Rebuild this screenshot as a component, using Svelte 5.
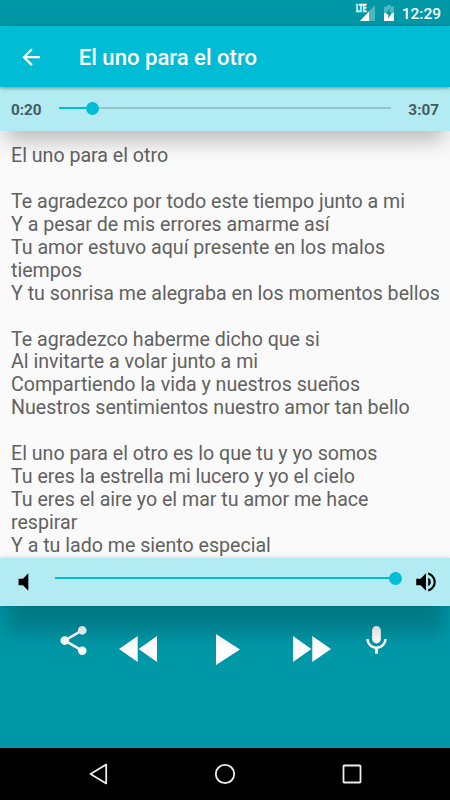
<script>
	let title = "El uno para el otro";
	let elapsed = "0:20";
	let duration = "3:07";
	let progress = 10.2;
	let volume = 100;

	const lyrics = `El uno para el otro

Te agradezco por todo este tiempo junto a mi
Y a pesar de mis errores amarme así
Tu amor estuvo aquí presente en los malos
tiempos
Y tu sonrisa me alegraba en los momentos bellos

Te agradezco haberme dicho que si
Al invitarte a volar junto a mi
Compartiendo la vida y nuestros sueños
Nuestros sentimientos nuestro amor tan bello

El uno para el otro es lo que tu y yo somos
Tu eres la estrella mi lucero y yo el cielo
Tu eres el aire yo el mar tu amor me hace
respirar
Y a tu lado me siento especial`;
</script>

<div class="screen">
	<div class="status-bar">
		<svg class="signal" width="21" height="22" viewBox="-1 -4 21 22">
			<path d="M19 1v16H4z" fill="#fff" fill-opacity="0.3" />
			<path d="M13 7.4V17H4z" fill="#fff" />
			<path d="M0 0h11v9H0z" fill="#0097a7" />
			<text x="0" y="8.2" textLength="10.4" lengthAdjust="spacingAndGlyphs">LTE</text>
		</svg>
		<svg class="battery" width="10" height="16" viewBox="0 0 10 16">
			<path d="M3 0h4v1.5h3V8H0V1.5h3z" fill="#fff" fill-opacity="0.3" />
			<path d="M0 8h10v8H0z" fill="#fff" />
			<path d="M5.7 3.5v4.2H8L4.3 13.5V9.3H2z" fill="#0097a7" />
		</svg>
		<span class="clock">12:29</span>
	</div>

	<header class="toolbar">
		<svg width="26.25" height="26.25" viewBox="0 0 24 24" fill="#fff">
			<path d="M20 11H7.83l5.59-5.59L12 4l-8 8 8 8 1.41-1.41L7.83 13H20v-2z" />
		</svg>
		<h1>{title}</h1>
	</header>

	<div class="seek-bar">
		<span class="time">{elapsed}</span>
		<div class="track">
			<div class="fill" style="width: {progress}%"></div>
			<div class="thumb" style="left: {progress}%"></div>
		</div>
		<span class="time">{duration}</span>
	</div>

	<main class="lyrics">{lyrics}</main>

	<div class="volume-bar">
		<svg width="26" height="26" viewBox="0 0 24 24">
			<path d="M7 9v6h4l5 5V4l-5 5H7z" />
		</svg>
		<div class="track">
			<div class="fill" style="width: {volume}%"></div>
			<div class="thumb" style="left: {volume}%"></div>
		</div>
		<svg width="26" height="26" viewBox="0 0 24 24">
			<path d="M3 9v6h4l5 5V4L7 9H3zm13.5 3c0-1.77-1.02-3.29-2.5-4.03v8.05c1.48-.73 2.5-2.25 2.5-4.02zM14 3.23v2.06c2.89.86 5 3.54 5 6.71s-2.11 5.85-5 6.71v2.06c4.01-.91 7-4.49 7-8.77s-2.99-7.86-7-8.77z" />
		</svg>
	</div>

	<div class="controls">
		<svg class="share" width="35" height="35" viewBox="0 0 24 24">
			<path d="M18 16.08c-.76 0-1.44.3-1.96.77L8.91 12.7c.05-.23.09-.46.09-.7s-.04-.47-.09-.7l7.05-4.11c.54.5 1.25.81 2.04.81 1.66 0 3-1.34 3-3s-1.34-3-3-3-3 1.34-3 3c0 .24.04.47.09.7L8.04 9.81C7.5 9.31 6.79 9 6 9c-1.66 0-3 1.34-3 3s1.34 3 3 3c.79 0 1.5-.31 2.04-.81l7.12 4.16c-.05.21-.08.43-.08.65 0 1.61 1.31 2.92 2.92 2.92 1.61 0 2.92-1.31 2.92-2.92s-1.31-2.92-2.92-2.92z" />
		</svg>
		<svg class="rewind" width="38" height="26" viewBox="0 0 38 26">
			<path d="M18.7 0v26L0 13zM38 0v26L19.6 13z" />
		</svg>
		<svg class="play" width="24" height="31" viewBox="0 0 24 31">
			<path d="M0 0v31l24-15.5z" />
		</svg>
		<svg class="forward" width="38" height="26" viewBox="0 0 38 26">
			<path d="M0 0v26l18.4-13zM19.3 0v26L38 13z" />
		</svg>
		<svg class="mic" width="35" height="35" viewBox="0 0 24 24">
			<path d="M12 14c1.66 0 2.99-1.34 2.99-3L15 5c0-1.66-1.34-3-3-3S9 3.34 9 5v6c0 1.66 1.34 3 3 3zm5.3-3c0 3-2.54 5.1-5.3 5.1S6.7 14 6.7 11H5c0 3.41 2.72 6.23 6 6.72V21h2v-3.28c3.28-.48 6-3.3 6-6.72h-1.7z" />
		</svg>
	</div>

	<nav class="nav-bar">
		<svg width="22" height="22" viewBox="0 0 22 22">
			<path d="M18.2 1.6v18.8L2.5 11z" />
		</svg>
		<svg width="22" height="22" viewBox="0 0 22 22">
			<circle cx="11" cy="11" r="9.2" />
		</svg>
		<svg width="22" height="22" viewBox="0 0 22 22">
			<rect x="2.5" y="2.5" width="17" height="17" rx="0.7" />
		</svg>
	</nav>
</div>

<style>
	:global(body) {
		margin: 0;
	}

	.screen {
		display: flex;
		flex-direction: column;
		width: 450px;
		height: 800px;
		overflow: hidden;
		background: #fafafa;
		font-family: Roboto, sans-serif;
	}

	svg {
		display: block;
		flex-shrink: 0;
	}

	.status-bar {
		display: flex;
		justify-content: flex-end;
		box-sizing: border-box;
		height: 26px;
		flex-shrink: 0;
		padding-right: 9px;
		background: #0097a7;
		color: #fff;
	}

	.signal {
		margin: 0 8px 0 0;
		overflow: visible;
	}

	.signal text {
		font-size: 10px;
		font-weight: 700;
		fill: #fff;
		stroke: #fff;
		stroke-width: 0.5px;
	}

	.battery {
		margin: 5px 8px 0 0;
	}

	.clock {
		font-size: 15.5px;
		font-weight: 500;
		line-height: 28px;
	}

	.toolbar {
		display: flex;
		align-items: center;
		flex-shrink: 0;
		gap: 35px;
		height: 61px;
		padding-left: 17.5px;
		background: #00bcd4;
		box-shadow: 0 1px 4px rgba(0, 0, 0, 0.4);
		position: relative;
		z-index: 3;
	}

	.toolbar svg {
		margin-top: 1px;
	}

	h1 {
		margin: 0;
		color: #fff;
		font-size: 22.1px;
		font-weight: 500;
	}

	.seek-bar {
		display: flex;
		align-items: center;
		box-sizing: border-box;
		flex-shrink: 0;
		height: 43.5px;
		padding: 0 11px;
		gap: 17px;
		background: #b2ebf2;
		box-shadow: 0 15px 22px -6px rgba(0, 0, 0, 0.27);
		position: relative;
		z-index: 2;
	}

	.time {
		margin-top: 2px;
		color: #455c5f;
		font-size: 15.3px;
		font-weight: 700;
	}

	.track {
		flex: 1;
		height: 2px;
		margin-bottom: 1px;
		background: #93c5cc;
		position: relative;
	}

	.fill {
		height: 2px;
		background: #00bcd4;
	}

	.thumb {
		position: absolute;
		top: -5.5px;
		width: 13px;
		height: 13px;
		margin-left: -6.5px;
		border-radius: 50%;
		background: #00bcd4;
	}

	.lyrics {
		flex: 1;
		min-height: 0;
		padding: 14.5px 0 0 11px;
		overflow: hidden;
		color: #616161;
		font-size: 19.6px;
		line-height: 22.94px;
		white-space: pre-wrap;
	}

	.volume-bar {
		display: flex;
		align-items: center;
		box-sizing: border-box;
		flex-shrink: 0;
		height: 48px;
		padding: 0 11px;
		background: #b2ebf2;
		box-shadow: 0 0 5px rgba(0, 0, 0, 0.18), 0 32px 20px -6px rgba(0, 0, 0, 0.2);
		position: relative;
		z-index: 2;
	}

	.volume-bar .track {
		margin: 0 18px 7px;
	}

	.controls {
		display: flex;
		box-sizing: border-box;
		flex-shrink: 0;
		height: 142.5px;
		padding: 17px 0 0 56px;
		background: #0097a7;
		fill: #fff;
	}

	.rewind,
	.forward {
		margin-top: 13.5px;
	}

	.rewind {
		margin-left: 28px;
	}

	.play {
		margin: 11px 0 0 59px;
	}

	.forward {
		margin-left: 53px;
	}

	.mic {
		margin-left: 27.7px;
	}

	.nav-bar {
		display: flex;
		align-items: center;
		justify-content: center;
		flex-shrink: 0;
		gap: 104.5px;
		height: 52px;
		background: #000;
		fill: none;
		stroke: #eee;
		stroke-width: 1.8;
		stroke-linejoin: round;
	}
</style>
